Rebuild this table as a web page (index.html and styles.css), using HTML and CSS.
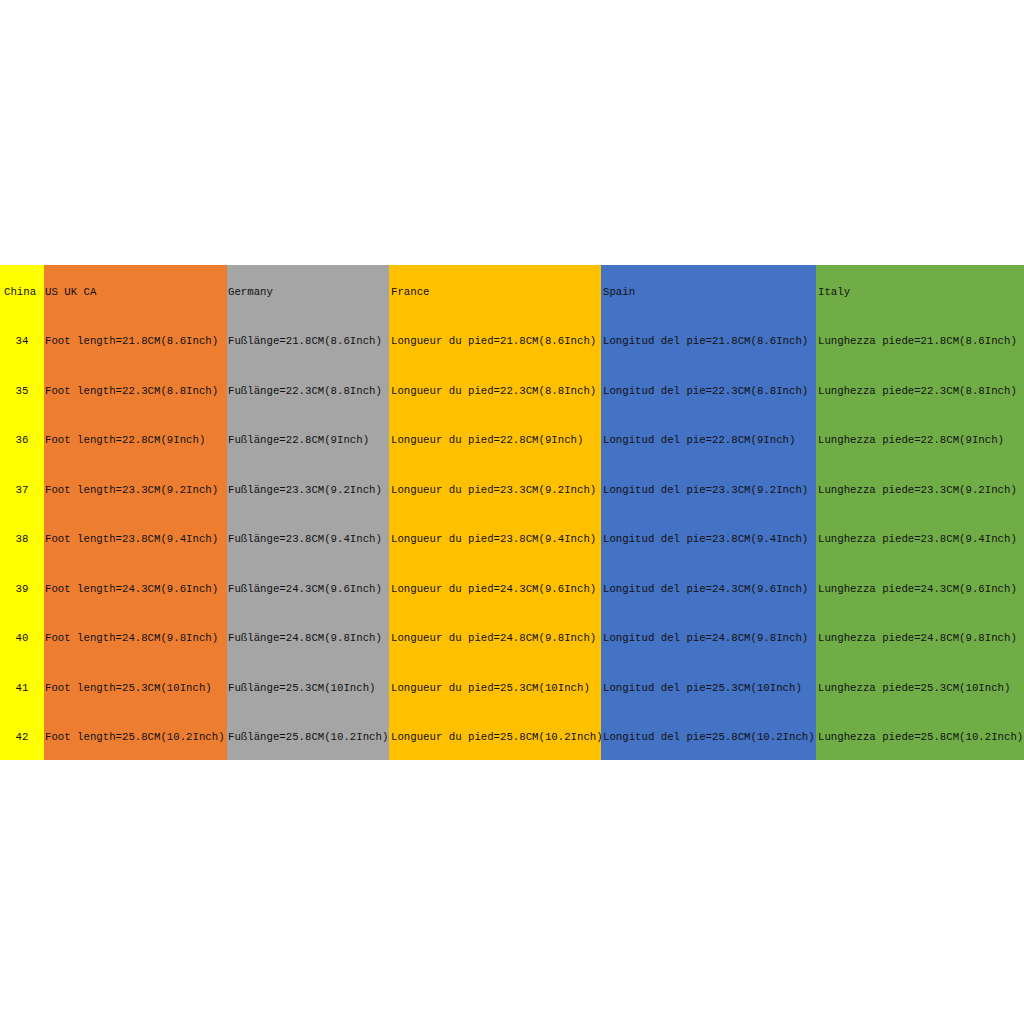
FILE: index.html
```html
<!DOCTYPE html>
<html>
<head>
<meta charset="utf-8">
<link rel="stylesheet" href="styles.css">
</head>
<body>
<div class="page">
  <div class="table">
    <div class="col china">
      <div class="cell head">China</div>
      <div class="cell">34</div><div class="cell">35</div><div class="cell">36</div>
      <div class="cell">37</div><div class="cell">38</div><div class="cell">39</div>
      <div class="cell">40</div><div class="cell">41</div><div class="cell">42</div>
    </div>
    <div class="col us">
      <div class="cell">US UK CA</div>
      <div class="cell">Foot length=21.8CM(8.6Inch)</div>
      <div class="cell">Foot length=22.3CM(8.8Inch)</div>
      <div class="cell">Foot length=22.8CM(9Inch)</div>
      <div class="cell">Foot length=23.3CM(9.2Inch)</div>
      <div class="cell">Foot length=23.8CM(9.4Inch)</div>
      <div class="cell">Foot length=24.3CM(9.6Inch)</div>
      <div class="cell">Foot length=24.8CM(9.8Inch)</div>
      <div class="cell">Foot length=25.3CM(10Inch)</div>
      <div class="cell">Foot length=25.8CM(10.2Inch)</div>
    </div>
    <div class="col de">
      <div class="cell">Germany</div>
      <div class="cell">Fußlänge=21.8CM(8.6Inch)</div>
      <div class="cell">Fußlänge=22.3CM(8.8Inch)</div>
      <div class="cell">Fußlänge=22.8CM(9Inch)</div>
      <div class="cell">Fußlänge=23.3CM(9.2Inch)</div>
      <div class="cell">Fußlänge=23.8CM(9.4Inch)</div>
      <div class="cell">Fußlänge=24.3CM(9.6Inch)</div>
      <div class="cell">Fußlänge=24.8CM(9.8Inch)</div>
      <div class="cell">Fußlänge=25.3CM(10Inch)</div>
      <div class="cell">Fußlänge=25.8CM(10.2Inch)</div>
    </div>
    <div class="col fr">
      <div class="cell">France</div>
      <div class="cell">Longueur du pied=21.8CM(8.6Inch)</div>
      <div class="cell">Longueur du pied=22.3CM(8.8Inch)</div>
      <div class="cell">Longueur du pied=22.8CM(9Inch)</div>
      <div class="cell">Longueur du pied=23.3CM(9.2Inch)</div>
      <div class="cell">Longueur du pied=23.8CM(9.4Inch)</div>
      <div class="cell">Longueur du pied=24.3CM(9.6Inch)</div>
      <div class="cell">Longueur du pied=24.8CM(9.8Inch)</div>
      <div class="cell">Longueur du pied=25.3CM(10Inch)</div>
      <div class="cell">Longueur du pied=25.8CM(10.2Inch)</div>
    </div>
    <div class="col es">
      <div class="cell">Spain</div>
      <div class="cell">Longitud del pie=21.8CM(8.6Inch)</div>
      <div class="cell">Longitud del pie=22.3CM(8.8Inch)</div>
      <div class="cell">Longitud del pie=22.8CM(9Inch)</div>
      <div class="cell">Longitud del pie=23.3CM(9.2Inch)</div>
      <div class="cell">Longitud del pie=23.8CM(9.4Inch)</div>
      <div class="cell">Longitud del pie=24.3CM(9.6Inch)</div>
      <div class="cell">Longitud del pie=24.8CM(9.8Inch)</div>
      <div class="cell">Longitud del pie=25.3CM(10Inch)</div>
      <div class="cell">Longitud del pie=25.8CM(10.2Inch)</div>
    </div>
    <div class="col it">
      <div class="cell">Italy</div>
      <div class="cell">Lunghezza piede=21.8CM(8.6Inch)</div>
      <div class="cell">Lunghezza piede=22.3CM(8.8Inch)</div>
      <div class="cell">Lunghezza piede=22.8CM(9Inch)</div>
      <div class="cell">Lunghezza piede=23.3CM(9.2Inch)</div>
      <div class="cell">Lunghezza piede=23.8CM(9.4Inch)</div>
      <div class="cell">Lunghezza piede=24.3CM(9.6Inch)</div>
      <div class="cell">Lunghezza piede=24.8CM(9.8Inch)</div>
      <div class="cell">Lunghezza piede=25.3CM(10Inch)</div>
      <div class="cell">Lunghezza piede=25.8CM(10.2Inch)</div>
    </div>
  </div>
</div>
</body>
</html>
```

FILE: styles.css
```css
html, body {
  margin: 0;
  padding: 0;
  background: #ffffff;
}
.page {
  width: 1024px;
  height: 1024px;
  padding-top: 265px;
  box-sizing: border-box;
}
.table {
  display: flex;
  width: 1024px;
  height: 495px;
  font-family: "Liberation Mono", "DejaVu Sans Mono", monospace;
  font-size: 10.7px;
  color: #111111;
  white-space: nowrap;
}
.col {
  display: flex;
  flex-direction: column;
  overflow: visible;
}
.cell {
  height: 49.5px;
  box-sizing: border-box;
  display: flex;
  align-items: center;
  padding-left: 2px;
  padding-top: 4px;
}
.china { width: 44px; background: #ffff00; }
.china .cell { justify-content: center; padding-left: 0; }
.china .head { justify-content: flex-start; padding-left: 4px; }
.us { width: 183px; background: #ed7d31; }
.us .cell { padding-left: 1px; }
.de { width: 162px; background: #a5a5a5; }
.de .cell { padding-left: 1px; }
.fr { width: 212px; background: #ffc000; }
.es { width: 215px; background: #4472c4; }
.it { width: 208px; background: #70ad47; }
```
